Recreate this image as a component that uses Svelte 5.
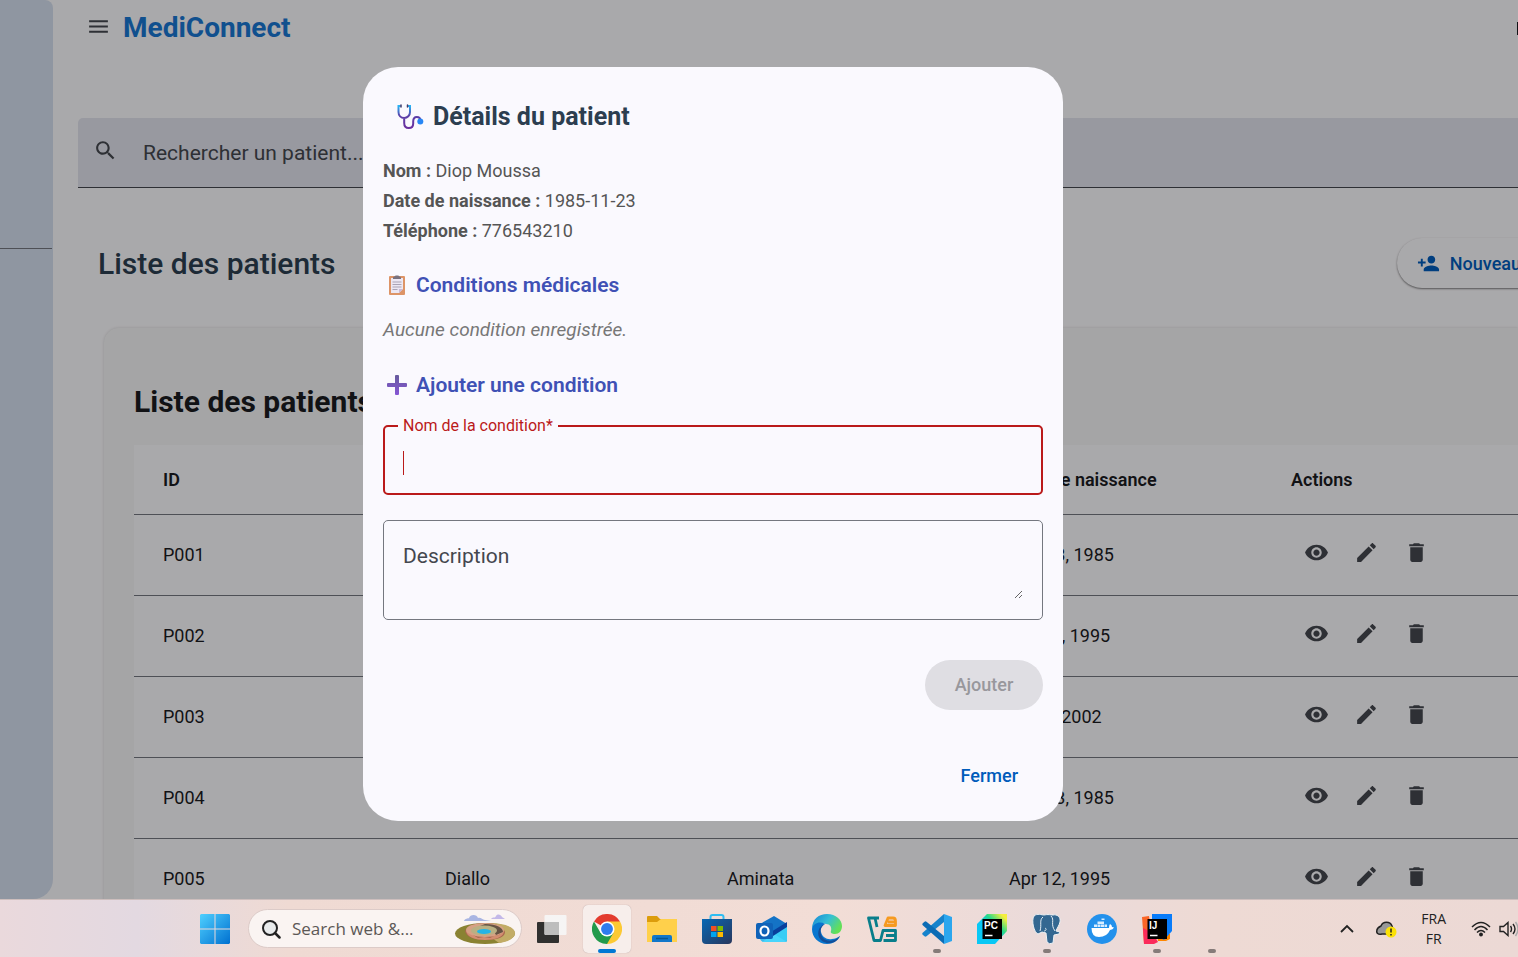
<script>
  const patients = [
    { id: 'P001', nom: 'Diop', prenom: 'Moussa', date: 'Nov 23, 1985' },
    { id: 'P002', nom: 'Diallo', prenom: 'Aminata', date: 'Apr 12, 1995' },
    { id: 'P003', nom: 'Ndiaye', prenom: 'Fatou', date: 'Jan 5, 2002' },
    { id: 'P004', nom: 'Diop', prenom: 'Moussa', date: 'Nov 23, 1985' },
    { id: 'P005', nom: 'Diallo', prenom: 'Aminata', date: 'Apr 12, 1995' }
  ];
  const actions = [
    { label: 'Voir', d: 'M12 4.5C7 4.5 2.73 7.61 1 12c1.73 4.39 6 7.5 11 7.5s9.27-3.11 11-7.5c-1.73-4.39-6-7.5-11-7.5zM12 17c-2.76 0-5-2.24-5-5s2.24-5 5-5 5 2.24 5 5-2.24 5-5 5zm0-8c-1.66 0-3 1.34-3 3s1.34 3 3 3 3-1.34 3-3-1.34-3-3-3z' },
    { label: 'Modifier', d: 'M3 17.25V21h3.75L17.81 9.94l-3.75-3.75L3 17.25zM20.71 7.04c.39-.39.39-1.02 0-1.41l-2.34-2.34c-.39-.39-1.02-.39-1.41 0l-1.83 1.83 3.75 3.75 1.83-1.83z' },
    { label: 'Supprimer', d: 'M6 19c0 1.1.9 2 2 2h8c1.1 0 2-.9 2-2V7H6v12zM19 4h-3.5l-1-1h-5l-1 1H5v2h14V4z' }
  ];
  let condition = $state('');
  let description = $state('');
</script>

<div class="screen">
  <div class="page">
    <aside class="sidebar"><hr /></aside>

    <main>
      <header>
        <button class="icon" aria-label="Menu">
          <svg width="25" height="25" viewBox="0 0 24 24" fill="currentColor"><path d="M3 18h18v-2H3v2zm0-5h18v-2H3v2zm0-7v2h18V6H3z" /></svg>
        </button>
        <span class="brand">MediConnect</span>
        <span class="edge"></span>
      </header>

      <label class="search">
        <svg width="25" height="25" viewBox="0 0 24 24" fill="currentColor"><path d="M15.5 14h-.79l-.28-.27C15.41 12.59 16 11.11 16 9.5 16 5.91 13.09 3 9.5 3S3 5.91 3 9.5 5.91 16 9.5 16c1.61 0 3.09-.59 4.23-1.57l.27.28v.79l5 4.99L20.49 19l-4.99-5zm-6 0C7.01 14 5 11.99 5 9.5S7.01 5 9.5 5 14 7.01 14 9.5 11.99 14 9.5 14z" /></svg>
        <input type="text" placeholder="Rechercher un patient..." aria-label="Rechercher un patient" />
      </label>

      <div class="titlebar">
        <h1>Liste des patients</h1>
        <button class="new">
          <svg width="23" height="23" viewBox="0 0 24 24" fill="currentColor"><path d="M15 12c2.21 0 4-1.79 4-4s-1.79-4-4-4-4 1.79-4 4 1.79 4 4 4zm-9-2V7H4v3H1v2h3v3h2v-3h3v-2H6zm9 4c-2.67 0-8 1.34-8 4v2h16v-2c0-2.66-5.33-4-8-4z" /></svg>
          Nouveau
        </button>
      </div>

      <section class="card">
        <h2>Liste des patients</h2>
        <table>
          <thead>
            <tr><th>ID</th><th>Nom</th><th>Prénom</th><th>Date de naissance</th><th>Actions</th></tr>
          </thead>
          <tbody>
            {#each patients as p}
              <tr>
                <td>{p.id}</td><td>{p.nom}</td><td>{p.prenom}</td><td>{p.date}</td>
                <td>
                  <div class="actions">
                    {#each actions as a}
                      <button class="icon" aria-label="{a.label} {p.id}">
                        <svg width="25" height="25" viewBox="0 0 24 24" fill="currentColor"><path d={a.d} /></svg>
                      </button>
                    {/each}
                  </div>
                </td>
              </tr>
            {/each}
          </tbody>
        </table>
      </section>
    </main>

    <div class="overlay">
      <div class="dialog" role="dialog" aria-labelledby="dialog-title">
        <h2 id="dialog-title">
          <svg width="28" height="28" viewBox="0 0 28 28" fill="none" stroke-linecap="round">
            <defs><linearGradient id="tube" x1="0" y1="0" x2="0" y2="1"><stop offset="0" stop-color="#28b4f4" /><stop offset=".45" stop-color="#5b3fa8" /><stop offset="1" stop-color="#6a2f9e" /></linearGradient></defs>
            <path d="M4 3H2.500V9C2.500 12.500 5 15 8.200 15S14 12.500 14 9V3H12.500M8.200 15v5c0 3 1.800 5 4.600 5s4.400-2 4.400-4.500v-2c0-2.500 1.300-4.500 3.600-4.500 2.200 0 3.700 1.500 3.700 4" stroke="url(#tube)" stroke-width="2" />
            <path d="M5 2v2M11.500 2v2" stroke="#433b6b" stroke-width="1.500" />
            <circle cx="24.300" cy="18.500" r="3" fill="#2787f5" />
          </svg>
          Détails du patient
        </h2>
        <div class="info">
          <p><strong>Nom :</strong> Diop Moussa</p>
          <p><strong>Date de naissance :</strong> 1985-11-23</p>
          <p><strong>Téléphone :</strong> 776543210</p>
        </div>
        <h3>
          <svg width="20" height="22" viewBox="0 0 20 22"><rect x="2" y="2" width="16" height="19" rx="1" fill="#dd9467" /><path d="M4 4h12v11l-4 4H4z" fill="#ece7f3" /><path d="M12 19v-4h4z" fill="#c9b9d9" /><path d="M6 4c0-2 2-1 2.500-2.500h3C12 3 14 2 14 4v1H6z" fill="#79727f" /><path d="M5.500 8h9M5.500 10.500h9M5.500 13h9M5.500 15.500h5" stroke="#aaa3b5" /></svg>
          Conditions médicales
        </h3>
        <p class="empty">Aucune condition enregistrée.</p>
        <h3>
          <svg width="20" height="22" viewBox="0 0 20 22"><defs><linearGradient id="plus" x1="0" y1="0" x2="0" y2="1"><stop stop-color="#665b9c" /><stop offset="1" stop-color="#8655d6" /></linearGradient></defs><path d="M9 1h2q1 0 1 1v7h7q1 0 1 1v2q0 1-1 1h-7v7q0 1-1 1H9q-1 0-1-1v-7H1q-1 0-1-1v-2q0-1 1-1h7V2q0-1 1-1z" fill="url(#plus)" /></svg>
          Ajouter une condition
        </h3>
        <fieldset class="field">
          <legend><label for="cond">Nom de la condition*</label></legend>
          <span class="caret"></span>
          <input id="cond" bind:value={condition} />
        </fieldset>
        <div class="area">
          <textarea aria-label="Description" placeholder="Description" bind:value={description}></textarea>
        </div>
        <button class="add" disabled>Ajouter</button>
        <button class="close">Fermer</button>
      </div>
    </div>
  </div>

  <footer class="taskbar">
    <div class="apps">
      <button class="app" aria-label="Démarrer">
        <svg width="30" height="30" viewBox="0 0 30 30"><defs><linearGradient id="win" x1="0" y1="0" x2="1" y2="1"><stop stop-color="#4fd0ff" /><stop offset="1" stop-color="#0070d0" /></linearGradient></defs><path d="M1 0H14.500V14.500H0V1zM15.500 0H29l1 1V14.500H15.500zM0 15.500H14.500V30H1L0 29zM15.500 15.500H30V29l-1 1H15.500z" fill="url(#win)" /></svg>
      </button>
      <label class="websearch">
        <svg width="20" height="20" viewBox="0 0 20 20" fill="none" stroke="#222" stroke-width="2" stroke-linecap="round"><circle cx="9" cy="9" r="7" fill="#e9ebec" /><path d="M14 14l4.500 4.500" stroke-width="2.500" /></svg>
        <input type="text" placeholder="Search web &amp;..." aria-label="Search" />
        <svg width="62" height="32" viewBox="0 0 62 32"><path d="M10 8c1-3 4-2 5-3 1-4 8-4 9 0 3-1 4 2 7 2 2 0 4 1 6 1z" fill="#a9b5e2" /><path d="M37 6c2-3 4 0 5-3 2-3 5-1 6 1l3 2z" fill="#c3b8e8" /><ellipse cx="31" cy="20.500" rx="30" ry="10.500" fill="#8a8232" /><path d="M61 20c0-7-14-10-26-10l-4 10 14 10c9-1 16-5 16-10z" fill="#c2ac66" /><path d="M11 18c3-6 11-8 20-8 10 0 18 3 20 9 0 4-5 8-19 8-12 0-20-3-21-9z" fill="#a9684f" /><path d="M12 18c1 6 9 9 19 9s19-3 19-9l-5 4-5 1-4 2-6-1-6 1-5-3z" fill="#d38d70" /><ellipse cx="31" cy="17" rx="19" ry="7" fill="#d6a184" /><path d="M31 11c12 0 18 4 18 8l-7 3-4-7-12-2z" fill="#665344" /><ellipse cx="30" cy="17.500" rx="13" ry="5" fill="#b9b083" /><ellipse cx="30" cy="18.500" rx="7" ry="2.500" fill="#25b4e5" /></svg>
      </label>
      <button class="app" aria-label="Vue des tâches">
        <svg width="30" height="30" viewBox="0 0 30 30"><rect y="8" width="22" height="21" rx="1" fill="#30302f" /><rect x="7.500" y="1" width="22" height="20" rx="1" fill="#f5f5f5" opacity=".95" /><path d="M7.500 8H22v13H8.500l-1-1z" fill="#bdbdbd" /></svg>
      </button>
      <button class="app active" aria-label="Chrome">
        <svg width="30" height="30" viewBox="0 0 48 48"><path d="M24 24L3.200 12A24 24 0 0 1 44.800 12z" fill="#e33b2e" /><path d="M24 24V12H44.800A24 24 0 0 1 24 48z" fill="#fcc934" /><path d="M3.200 12L13.600 30 34.400 30 24 48A24 24 0 0 1 3.200 12z" fill="#229a4b" /><circle cx="24" cy="24" r="12" fill="#fff" /><circle cx="24" cy="24" r="9.500" fill="#2f7cee" /></svg>
      </button>
      <button class="app" aria-label="Explorateur">
        <svg width="30" height="30" viewBox="0 0 30 30"><path d="M0 3q0-1 1-1h9l3 3H29q1 0 1 1v9H0z" fill="#dc9c0c" /><path d="M0 8h10l4-3H30V28H0z" fill="#ffd04b" /><path d="M5 28v-5q0-2 2-2h16q2 0 2 2v5z" fill="#1177ca" /><path d="M9 24.500h12" stroke="#075793" stroke-width="1.500" /></svg>
      </button>
      <button class="app" aria-label="Store">
        <svg width="30" height="30" viewBox="0 0 30 30"><defs><linearGradient id="store" x1="0" y1="0" x2="1" y2="1"><stop stop-color="#0868b4" /><stop offset="1" stop-color="#28365c" /></linearGradient></defs><path d="M8.500 7V3q0-2 2-2h9q2 0 2 2V7" fill="none" stroke="#2fbdf2" stroke-width="2" /><path d="M0 5H30V26q0 4-4 4H4q-4 0-4-4z" fill="url(#store)" /><path d="M9 12h5.500v5H9z" fill="#f25022" /><path d="M15.500 12H21v5h-5.500z" fill="#7fba00" /><path d="M9 18h5.500v5H9z" fill="#00a4ef" /><path d="M15.500 18H21v5h-5.500z" fill="#ffb900" /></svg>
      </button>
      <button class="app" aria-label="Outlook">
        <svg width="32" height="30" viewBox="0 0 32 30"><path d="M4 10L18 2l13 8v16q0 2-2 2H9q-4 0-5-4z" fill="#1473c6" /><path d="M6 28L31 11v15q0 2-2 2z" fill="#38cdf5" /><path d="M18 20l13 8H8q-3 0-4-3z" fill="#50d9ff" opacity=".7" /><path d="M15 18L31 8v5l-14 9z" fill="#083f9c" /><rect y="9" width="17" height="16" rx="2" fill="#0f62b8" /><ellipse cx="8.500" cy="17" rx="4" ry="4.500" fill="none" stroke="#fff" stroke-width="2.200" /></svg>
      </button>
      <button class="app" aria-label="Edge">
        <svg width="30" height="30" viewBox="0 0 30 30"><defs><linearGradient id="edge" x1="0" y1="0" x2="1" y2=".5"><stop stop-color="#1684d5" /><stop offset=".55" stop-color="#35bfd5" /><stop offset="1" stop-color="#63df58" /></linearGradient></defs><path d="M0 15C0 5 7 0 15 0c9 0 15 6 15 12 0 5-3 8-7 8-3 0-5-1-4-3 1-4-1-7-5-7C7 8 2 10 0 15z" fill="url(#edge)" /><path d="M0 15C1 9 8 7 13 10c-4 2-5 5-4 8 1 5 6 8 11 7 3 0 5-1 8-3-3 5-7 8-13 8C6 30 0 23 0 15z" fill="#0876cf" /><path d="M13 10c-5 3-6 9-2 14 4 4 11 4 17-2 0 0-1 3-4 5-4 3-11 3-15-1-5-5-3-14 4-16z" fill="#124e9a" /></svg>
      </button>
      <button class="app" aria-label="VirtualBox">
        <svg width="30" height="28" viewBox="0 0 30 28" fill="none" stroke-width="2.800" stroke-linejoin="round"><path d="M12 3H8l2 9M7.500 3H1.500L7 25.500h6.500L16 15.500h12.500v10H16.500M28 20.500h-9" stroke="#087e8b" /><path d="M21 3h5q2.500 0 2.500 3v4.500H18zM21 7h7" stroke="#f69a20" /></svg>
      </button>
      <button class="app running" aria-label="VS Code">
        <svg width="30" height="30" viewBox="0 0 30 30"><path d="M22 0l8 3v24l-8 3z" fill="#2ba6ee" /><path d="M22 0L1 18.500q-1.500 1.200 0 2.500l1.500 1.300q1 .7 2 0L22 8z" fill="#1683cc" /><path d="M22 30L1 11.500q-1.500-1.200 0-2.500l1.500-1.300q1-.7 2 0L22 22z" fill="#0b6cb5" /></svg>
      </button>
      <button class="app" aria-label="PyCharm">
        <svg width="30" height="30" viewBox="0 0 30 30"><defs><linearGradient id="pc" x1="0" y1="1" x2="1" y2="0"><stop offset=".45" stop-color="#08c8f5" /><stop offset=".65" stop-color="#28d98a" /><stop offset=".9" stop-color="#f4ee3d" /></linearGradient></defs><path d="M10 0h20v17L18 30H0V10z" fill="url(#pc)" /><path d="M5.500 5h19.500v20H5.500z" fill="#000" /><text x="7" y="15" class="logo">PC</text><path d="M8 21.500h7.500" stroke="#fff" stroke-width="1.500" /></svg>
      </button>
      <button class="app running" aria-label="pgAdmin">
        <svg width="30" height="30" viewBox="0 0 30 30"><path d="M2 2C5-1 10 1 12 1c4-1 7 0 9 0 4-1 8 2 7 7-1 4-3 6-4 9l4 1-1 2-5 1-1 8q-4 2-6-1l-1-9-4-1-4 2C2 19-1 6 2 2z" fill="#336791" stroke="#eef2f5" /><path d="M11 3C7 6 10 11 8 17M19 2c4 4-1 8 4 15M12 17c2 0 3-2 1-3" fill="none" stroke="#e7eef4" /></svg>
      </button>
      <button class="app" aria-label="Docker">
        <svg width="30" height="30" viewBox="0 0 30 30"><circle cx="15" cy="15" r="15" fill="#2391ec" /><path d="M5 14h17q0-3 1-4 2 1 2 3l2 .5q-1 2-4 2.500-3 7-11 7-7.500 0-7.500-9z" fill="#fff" /><path d="M7 10.500h3V13H7zM10.500 10.500h3V13h-3zM14 10.500h3V13h-3zM10.500 7.500h6.500v2.500h-6.500zM14.500 6h3V4.500h-3zM17.500 10.500H20V13h-2.500z" fill="#d8edff" /></svg>
      </button>
      <button class="app running" aria-label="IntelliJ IDEA">
        <svg width="30" height="30" viewBox="0 0 30 30"><path d="M0 3l7-1 4 26-9 2z" fill="#fa6628" /><path d="M1 14l10 5 5 9-4 2H2z" fill="#fb2a5b" /><path d="M15 20l13 0v5l-4 2h-8z" fill="#ff8700" /><path d="M10 0h20v17l-8 9-12-8z" fill="#087cfa" /><path d="M5.500 5h19.500v20H5.500z" fill="#000" /><text x="7" y="15" class="logo">IJ</text><path d="M8 21.500h7.500" stroke="#fff" stroke-width="1.500" /></svg>
      </button>
      <button class="app running" aria-label="Application"></button>
    </div>
    <div class="tray">
      <svg width="14" height="10" viewBox="0 0 14 10" fill="none" stroke="#222" stroke-width="1.800"><path d="M1 8l6-6 6 6" /></svg>
      <svg width="22" height="18" viewBox="0 0 22 18"><path d="M6 14C2 15 0 13 1 10c0-2 2-3 4-4 2-5 9-5 11 0l1 3-5 5z" fill="#989898" stroke="#222" stroke-width="1.500" /><circle cx="15" cy="12" r="5.500" fill="#fbe106" /><path d="M15 8.500v4M15 14v1.500" stroke="#222" stroke-width="1.500" /></svg>
      <div class="lang"><span>FRA</span><span>FR</span></div>
      <div class="status">
        <svg width="20" height="16" viewBox="0 0 20 16" fill="none" stroke="#222" stroke-width="1.500"><path d="M1 6q9-9 18 0M3.500 9q6.500-7 13 0M6 11.500q4-4 8 0" /><circle cx="10" cy="13.500" r="1.200" fill="#222" /></svg>
        <svg width="20" height="16" viewBox="0 0 20 16" fill="none" stroke="#222" stroke-width="1.400"><path d="M1 5.500h3.500L9 1.500v13L4.500 10.500H1zM11.500 5q2 3 0 6M14 3q4 5 0 10" /><path d="M16.500 1q5 7 0 14" stroke="#aaa" /></svg>
      </div>
    </div>
  </footer>
</div>

<style>
  :global(body) { margin: 0; }
  * { box-sizing: border-box; }
  .screen { height: 100vh; display: flex; flex-direction: column; overflow: hidden; font-family: Roboto, "Liberation Sans", sans-serif; font-size: 18px; color: #1a1b1f; }
  button, input, textarea { font: inherit; color: inherit; }
  button { border: 0; background: none; padding: 0; }
  h1, h2, h3, p { margin: 0; }
  svg { flex: none; display: block; }
  .page { flex: 1; min-height: 0; position: relative; display: flex; overflow: hidden; background: #faf9fc; }
  .sidebar { flex: none; width: 53px; background: #d3dded; border-radius: 0 8px 20px 0; }
  .sidebar hr { margin: 248px 1px 0 0; border: 0; border-top: 1px solid #74777f; }
  main { flex: 1; min-width: 0; padding-left: 25px; overflow: hidden; }
  header { height: 118px; padding: 8px 0 0 8px; display: flex; align-items: flex-start; gap: 13px; }
  .icon { display: grid; place-items: center; color: #44474e; }
  header .icon { width: 24px; height: 36px; }
  .brand { font-size: 28px; line-height: 40px; font-weight: 700; color: #1976d2; }
  .edge { width: 1px; height: 13px; margin: 14px 0 0 auto; background: #1a1b1f; }
  .search { height: 70px; display: flex; align-items: center; gap: 25px; padding: 0 15px; background: #e0e2ec; border-radius: 5px 0 0; border-bottom: 1px solid #44474e; color: #44474e; }
  .search svg { margin-bottom: 4px; }
  .search input { flex: 1; border: 0; background: none; outline: 0; font-size: 21px; padding: 0; }
  input::placeholder, textarea::placeholder { color: #44474e; opacity: 1; }
  .titlebar { height: 140px; padding: 50px 0 0 20px; display: flex; align-items: flex-start; justify-content: space-between; }
  h1 { font-size: 30px; line-height: 52px; font-weight: 500; color: #2c3e50; }
  .new { height: 50px; padding: 0 0 0 20px; display: flex; align-items: center; gap: 10px; border-radius: 25px 0 0 25px; color: #005cbb; font-weight: 500; box-shadow: 0 1px 2px rgba(0, 0, 0, .5); white-space: nowrap; background: #faf9fc; margin-right: -3px; }
  .card { margin-left: 26px; padding: 44px 0 0 30px; background: #f4f4f5; border-radius: 15px 0 0; box-shadow: 0 0 3px rgba(0, 0, 0, .15); }
  .card h2 { font-size: 30px; line-height: 60px; height: 73px; font-weight: 700; }
  table { width: 1410px; table-layout: fixed; border-collapse: separate; border-spacing: 0; background: #faf9fc; }
  th, td { padding: 0 0 0 29px; text-align: left; border-bottom: 1px solid #74777f; }
  th { height: 70px; font-weight: 600; }
  td { height: 81px; padding-bottom: 2px; }
  .actions { display: flex; gap: 25px; margin: 0 0 3px 13px; }
  .overlay { position: absolute; inset: 0; background: rgba(0, 0, 0, .32); display: flex; justify-content: center; align-items: flex-start; padding: 67px 92px 0 0; }
  .dialog { width: 700px; padding: 20px; background: #faf9fe; border-radius: 35px; display: flex; flex-direction: column; }
  .dialog h2 { display: flex; align-items: center; gap: 9px; padding-left: 13px; font-size: 25px; line-height: 60px; font-weight: 700; color: #2c3e50; }
  .info { padding: 9px 0 24px; line-height: 30px; color: #555; }
  h3 { display: flex; align-items: center; gap: 9px; padding-left: 4px; font-size: 21px; line-height: 30px; font-weight: 600; color: #3f51b5; }
  .empty { padding: 15px 0 25px; font-size: 19px; line-height: 30px; font-style: italic; color: #777; }
  .field { flex: none; min-width: 0; height: 78px; margin: 17px 0 25px; padding: 8px 18px 0; border: 2px solid #ba1a1a; border-radius: 5px; display: flex; align-items: center; }
  legend { margin-left: -5px; padding: 0 5px; font-size: 16px; line-height: 18px; color: #ba1a1a; }
  .field input { flex: 1; min-width: 0; height: 40px; border: 0; padding: 0; outline: 0; background: none; font-size: 21px; }
  .caret { width: 1px; height: 24px; background: #ba1a1a; }
  .area { flex: none; height: 100px; padding: 20px 19px; border: 1px solid #74777f; border-radius: 5px; }
  textarea { display: block; width: 100%; height: 58px; padding: 0; border: 0; outline: 0; background: none; font-size: 21px; line-height: 30px; resize: vertical; }
  .add { align-self: flex-end; width: 118px; height: 50px; flex: none; margin-top: 40px; padding-bottom: 2px; border-radius: 25px; background: #dfdee3; color: #98979c; font-weight: 500; }
  .close { align-self: flex-end; height: 50px; margin: 40px 25px 1px 0; color: #005cbb; font-weight: 500; }
  .taskbar { flex: none; height: 58px; display: flex; justify-content: space-between; border-top: 1px solid #cdbebd; background: linear-gradient(90deg, #ead9dc, #e3d9e1 9%, #efdad3 19%, #f2ddd6 55%, #eadada 70%, #eedad4 80%, #ecd9d5); overflow: hidden; }
  .apps { display: flex; align-items: center; gap: 7px; padding-left: 191px; }
  .app { position: relative; width: 48px; height: 48px; display: grid; place-items: center; border-radius: 5px; }
  .active { background: #f7eeeb; box-shadow: 0 0 1px #a99; }
  .active::after, .running::after { content: ""; position: absolute; bottom: 0; left: 20px; width: 8px; height: 4px; border-radius: 2px; background: #857b79; }
  .active::after { left: 15px; width: 18px; background: #0078d4; }
  .websearch { width: 274px; height: 39px; margin: 0 -1px 0 2px; padding: 0 5px 0 12px; display: flex; align-items: center; border-radius: 20px; background: #faf4f2; border: 1px solid #dccbc8; gap: 11px; font-family: "Open Sans", "Noto Sans", sans-serif; font-size: 17px; }
  .websearch input { flex: 1; min-width: 0; border: 0; background: none; outline: 0; padding: 0; }
  .websearch input::placeholder { color: #5c5856; }
  .logo { font: 700 10px "Liberation Sans", sans-serif; fill: #fff; }
  .tray { display: flex; align-items: center; gap: 22px; margin-right: -1px; }
  .lang { display: flex; flex-direction: column; align-items: center; padding: 0 3px 0 1px; font: 14px/20px "Open Sans", "Noto Sans", sans-serif; color: #222; }
  .status { display: flex; gap: 8px; }
</style>
